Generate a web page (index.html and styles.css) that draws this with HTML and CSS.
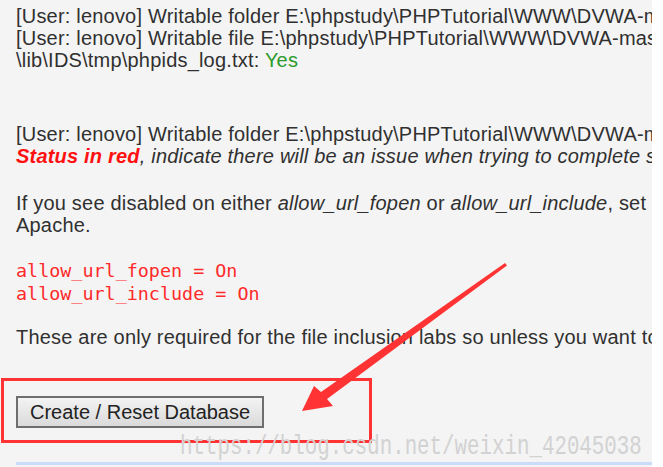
FILE: index.html
```html
<!DOCTYPE html>
<html>
<head>
<meta charset="utf-8">
<link rel="stylesheet" href="styles.css">
</head>
<body>
<div class="page">
  <div class="content">
    <p class="para first">[User: lenovo] Writable folder E:\phpstudy\PHPTutorial\WWW\DVWA-master\hackable\uploads\: <span class="ok">Yes</span><br>[User: lenovo] Writable file E:\phpstudy\PHPTutorial\WWW\DVWA-master\external\phpids\0.6<br>\lib\IDS\tmp\phpids_log.txt: <span class="ok">Yes</span></p>
    <p class="para p-config">[User: lenovo] Writable folder E:\phpstudy\PHPTutorial\WWW\DVWA-master\config: <span class="ok">Yes</span><br><em class="note"><strong class="bad">Status in red</strong>, indicate there will be an issue when trying to complete some modules.</em></p>
    <p class="para p-tip">If you see disabled on either <em>allow_url_fopen</em> or <em>allow_url_include</em>, set the following in your php.ini file and restart<br>Apache.</p>
    <pre class="ini">allow_url_fopen = On
allow_url_include = On</pre>
    <p class="para p-info">These are only required for the file inclusion labs so unless you want to play with those, you can ignore them.</p>
    <div class="highlight"><button class="btn" type="button">Create / Reset Database</button></div>
    <div class="rule"></div>
  </div>
  <div class="watermark">https://blog.csdn.net/weixin_42045038</div>
  <svg class="arrow" width="652" height="467" viewBox="0 0 652 467" xmlns="http://www.w3.org/2000/svg">
    <polygon points="505,263 507,265.5 327,399 333,406 302,411 314,386 321,392" fill="#ff3333"/>
  </svg>
</div>
</body>
</html>
```
FILE: styles.css
```css
html, body {
  margin: 0;
  padding: 0;
  background: #ffffff;
}

.page {
  position: relative;
  width: 652px;
  height: 467px;
  background: #f4f4f4;
  overflow: hidden;
}

.content {
  padding: 5px 0 0 16px;
  font-family: "Liberation Sans", Arial, sans-serif;
  font-size: 20px;
  line-height: 22px;
  letter-spacing: 0.2px;
  color: #303030;
}

.para {
  margin: 0;
  white-space: nowrap;
}

.p-config { margin-top: 52px; }
.p-tip { margin-top: 25px; }
.p-info { margin-top: 21px; }

.ok { color: #2b9a2b; }

.note { font-style: italic; }

.bad {
  color: #ff1010;
  font-weight: bold;
}

.ini {
  margin: 23px 0 0 0;
  font-family: "DejaVu Sans Mono", monospace;
  font-size: 18.4px;
  line-height: 23px;
  letter-spacing: 0;
  color: #ff2a2a;
}

.highlight {
  box-sizing: border-box;
  margin: 30px 0 0 -15px;
  width: 371px;
  border: 3px solid #ff3333;
  padding: 15px 0 12px 12px;
}

.btn {
  display: block;
  margin: 0;
  padding: 3px 12px 3px 12px;
  font-family: "Liberation Sans", Arial, sans-serif;
  font-size: 20px;
  line-height: 22px;
  color: #222222;
  background: linear-gradient(#f3f3f3, #dadada);
  border: 2px solid #6e6e6e;
  border-radius: 0;
}

.rule {
  margin-top: 19px;
  border-top: 3px solid #cadcfa;
}

.watermark {
  position: absolute;
  left: 180px;
  top: 434px;
  font-family: "Liberation Mono", monospace;
  font-size: 20.8px;
  line-height: 20px;
  color: #d2d2d2;
  transform: scaleY(1.3);
  transform-origin: left top;
  white-space: nowrap;
}

.arrow {
  position: absolute;
  left: 0;
  top: 0;
  pointer-events: none;
}
```
